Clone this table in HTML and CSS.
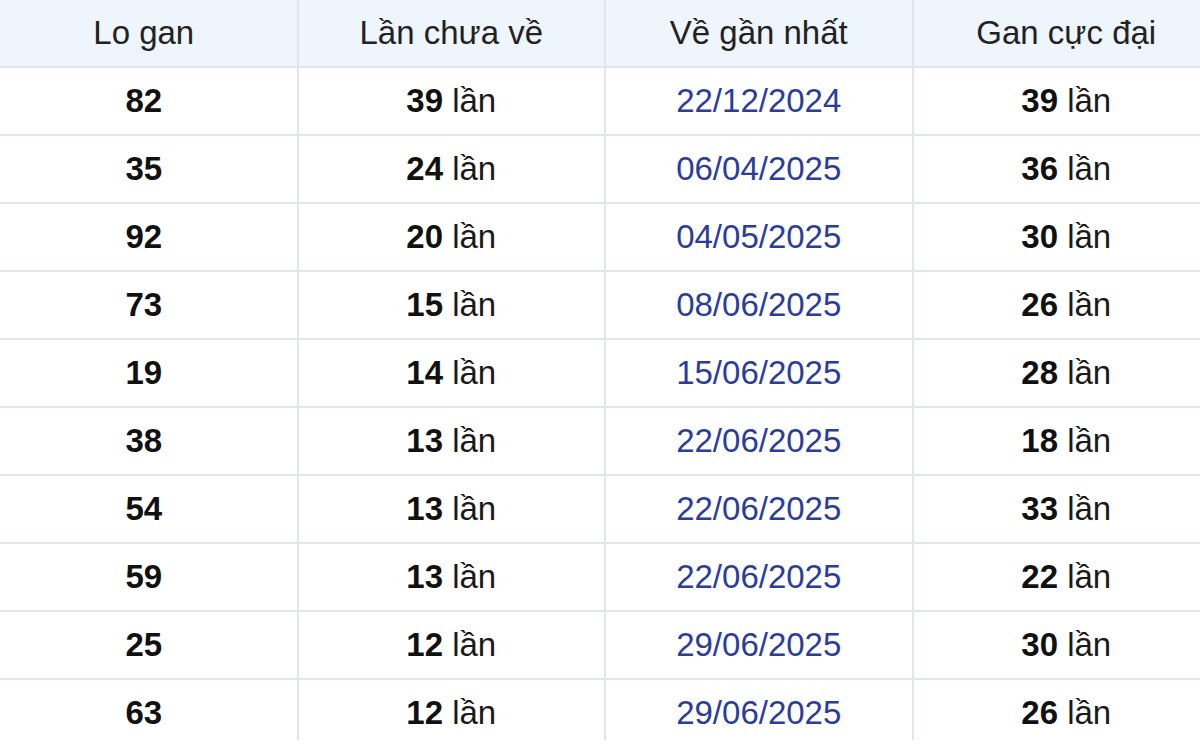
FILE: index.html
```html
<!DOCTYPE html>
<html lang="vi">
<head>
<meta charset="utf-8">
<link rel="stylesheet" href="styles.css">
</head>
<body>
<div class="clip">
<table class="gan">
  <thead>
    <tr><th>Lo gan</th><th>Lần chưa về</th><th>Về gần nhất</th><th>Gan cực đại</th></tr>
  </thead>
  <tbody>
    <tr><td><b>82</b></td><td><b>39</b> lần</td><td class="date">22/12/2024</td><td><b>39</b> lần</td></tr>
    <tr><td><b>35</b></td><td><b>24</b> lần</td><td class="date">06/04/2025</td><td><b>36</b> lần</td></tr>
    <tr><td><b>92</b></td><td><b>20</b> lần</td><td class="date">04/05/2025</td><td><b>30</b> lần</td></tr>
    <tr><td><b>73</b></td><td><b>15</b> lần</td><td class="date">08/06/2025</td><td><b>26</b> lần</td></tr>
    <tr><td><b>19</b></td><td><b>14</b> lần</td><td class="date">15/06/2025</td><td><b>28</b> lần</td></tr>
    <tr><td><b>38</b></td><td><b>13</b> lần</td><td class="date">22/06/2025</td><td><b>18</b> lần</td></tr>
    <tr><td><b>54</b></td><td><b>13</b> lần</td><td class="date">22/06/2025</td><td><b>33</b> lần</td></tr>
    <tr><td><b>59</b></td><td><b>13</b> lần</td><td class="date">22/06/2025</td><td><b>22</b> lần</td></tr>
    <tr><td><b>25</b></td><td><b>12</b> lần</td><td class="date">29/06/2025</td><td><b>30</b> lần</td></tr>
    <tr><td><b>63</b></td><td><b>12</b> lần</td><td class="date">29/06/2025</td><td><b>26</b> lần</td></tr>
  </tbody>
</table>
</div>
</body>
</html>
```
FILE: styles.css
```css
html, body {
  margin: 0;
  padding: 0;
  background: #ffffff;
  overflow: hidden;
}
.clip {
  height: 740px;
  overflow: hidden;
}
.gan {
  margin-left: -11px;
  width: 1232px;
  border-collapse: collapse;
  table-layout: fixed;
  font-family: "Liberation Sans", Arial, sans-serif;
  font-size: 33px;
  color: #1a1a1a;
}
.gan th, .gan td {
  border: 2px solid #e2e6eb;
  text-align: center;
  vertical-align: middle;
  padding: 0;
}
.gan th {
  height: 66px;
  border-top: none;
  background: #eef5fd;
  font-weight: normal;
  color: #222222;
}
.gan td {
  height: 66px;
}
.gan td b {
  color: #111111;
}
.gan td.date {
  color: #2b3c9e;
}
```
